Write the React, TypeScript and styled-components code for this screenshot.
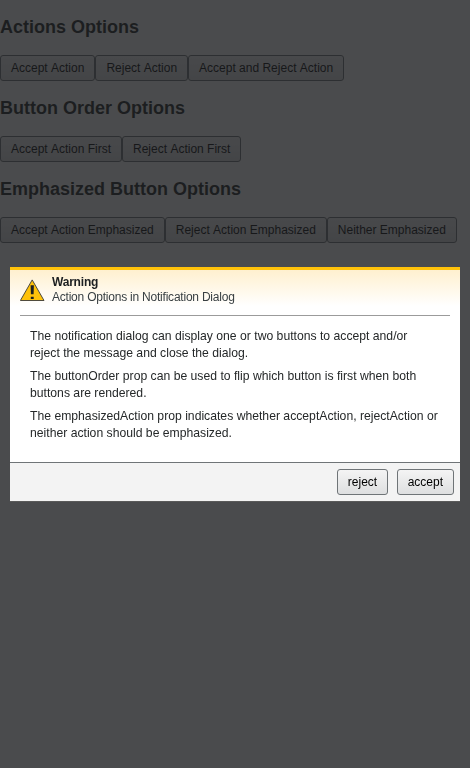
import React from 'react';
import styled, { createGlobalStyle } from 'styled-components';

const GlobalStyle = createGlobalStyle`
  *, *::before, *::after { box-sizing: border-box; }
  body {
    margin: 0;
    background: #fff;
    color: #1c1f21;
    font-family: "Liberation Sans", Arial, Helvetica, sans-serif;
    font-size: 14px;
  }
`;

const Page = styled.main`
  display: flow-root;
  height: 100vh;
  overflow: hidden;
`;

const Heading = styled.h2`
  margin: 15px 0;
  font-size: 18px;
  line-height: 25px;
  font-weight: 700;
`;

const ButtonRow = styled.div`
  display: flex;
`;

const Button = styled.button`
  height: 26px;
  padding: 0 10px;
  border: 1px solid #6f7477;
  border-radius: 3px;
  background: linear-gradient(to bottom, #f4f4f4, #dedfe0);
  color: #000;
  font: 12px/18px "Liberation Sans", Arial, Helvetica, sans-serif;
  font-kerning: none;
  white-space: nowrap;
  cursor: pointer;
`;

const Overlay = styled.div`
  position: fixed;
  inset: 0;
  display: flex;
  align-items: center;
  justify-content: center;
  padding: 0 10px;
  background: rgba(29, 30, 32, 0.8);
`;

const Dialog = styled.section`
  width: 100%;
  height: 234px;
  display: flex;
  flex-direction: column;
  background: #fff;
  box-shadow: 0 1px 0 #5a5a5a;
`;

const Header = styled.header`
  height: 49px;
  padding: 0 10px;
  border-top: 3px solid #ffc20a;
  background: linear-gradient(to bottom, #fff0cf, #fff 36px);
`;

const HeaderContent = styled.div`
  display: flex;
  height: 46px;
  border-bottom: 1px solid #9b9b9b;
`;

const WarningIcon = styled.svg`
  display: block;
  width: 25px;
  height: 24px;
  margin: 8px 7px 0 0;
`;

const Titles = styled.div`
  padding-top: 5px;
  font-size: 12px;
  line-height: 15px;
`;

const Signal = styled.div`
  font-weight: 700;
  letter-spacing: -0.2px;
`;

const Title = styled.div`
  color: #383f42;
  letter-spacing: -0.22px;
`;

const Body = styled.div`
  flex: 1;
  padding: 12px 20px 0;
  color: #252829;
  font-size: 12.194px;
  line-height: 17px;
`;

const Message = styled.p`
  margin: 0 0 6px;
`;

const Footer = styled.footer`
  display: flex;
  align-items: flex-start;
  justify-content: flex-end;
  gap: 8.5px;
  height: 39px;
  padding: 6px 6px 0;
  border-top: 1px solid #6f7477;
  background: #f3f3f3;
`;

const sections = [
  { heading: 'Actions Options', buttons: ['Accept Action', 'Reject Action', 'Accept and Reject Action'] },
  { heading: 'Button Order Options', buttons: ['Accept Action First', 'Reject Action First'] },
  {
    heading: 'Emphasized Button Options',
    buttons: ['Accept Action Emphasized', 'Reject Action Emphasized', 'Neither Emphasized'],
  },
];

const messages = [
  'The notification dialog can display one or two buttons to accept and/or reject the message and close the dialog.',
  'The buttonOrder prop can be used to flip which button is first when both buttons are rendered.',
  'The emphasizedAction prop indicates whether acceptAction, rejectAction or neither action should be emphasized.',
];

export default function App() {
  return (
    <>
      <GlobalStyle />
      <Page>
        {sections.map(({ heading, buttons }) => (
          <React.Fragment key={heading}>
            <Heading>{heading}</Heading>
            <ButtonRow>
              {buttons.map((label) => (
                <Button key={label} type="button">{label}</Button>
              ))}
            </ButtonRow>
          </React.Fragment>
        ))}
      </Page>
      <Overlay>
        <Dialog role="alertdialog" aria-modal="true" aria-labelledby="dialog-title">
          <Header>
            <HeaderContent>
              <WarningIcon viewBox="0 0 25 24" aria-hidden="true">
                <path d="M12.2 1.9 24 22.5H.4Z" fill="#ffc20a" stroke="#3b3a36" strokeWidth="0.9" />
                <path d="M10.6 7.3h3.3l-.3 9h-2.7ZM10.8 18.7h2.9v2.4h-2.9Z" fill="#1c1f21" />
              </WarningIcon>
              <Titles>
                <Signal>Warning</Signal>
                <Title id="dialog-title">Action Options in Notification Dialog</Title>
              </Titles>
            </HeaderContent>
          </Header>
          <Body>
            {messages.map((message) => (
              <Message key={message}>{message}</Message>
            ))}
          </Body>
          <Footer>
            <Button type="button">reject</Button>
            <Button type="button">accept</Button>
          </Footer>
        </Dialog>
      </Overlay>
    </>
  );
}
